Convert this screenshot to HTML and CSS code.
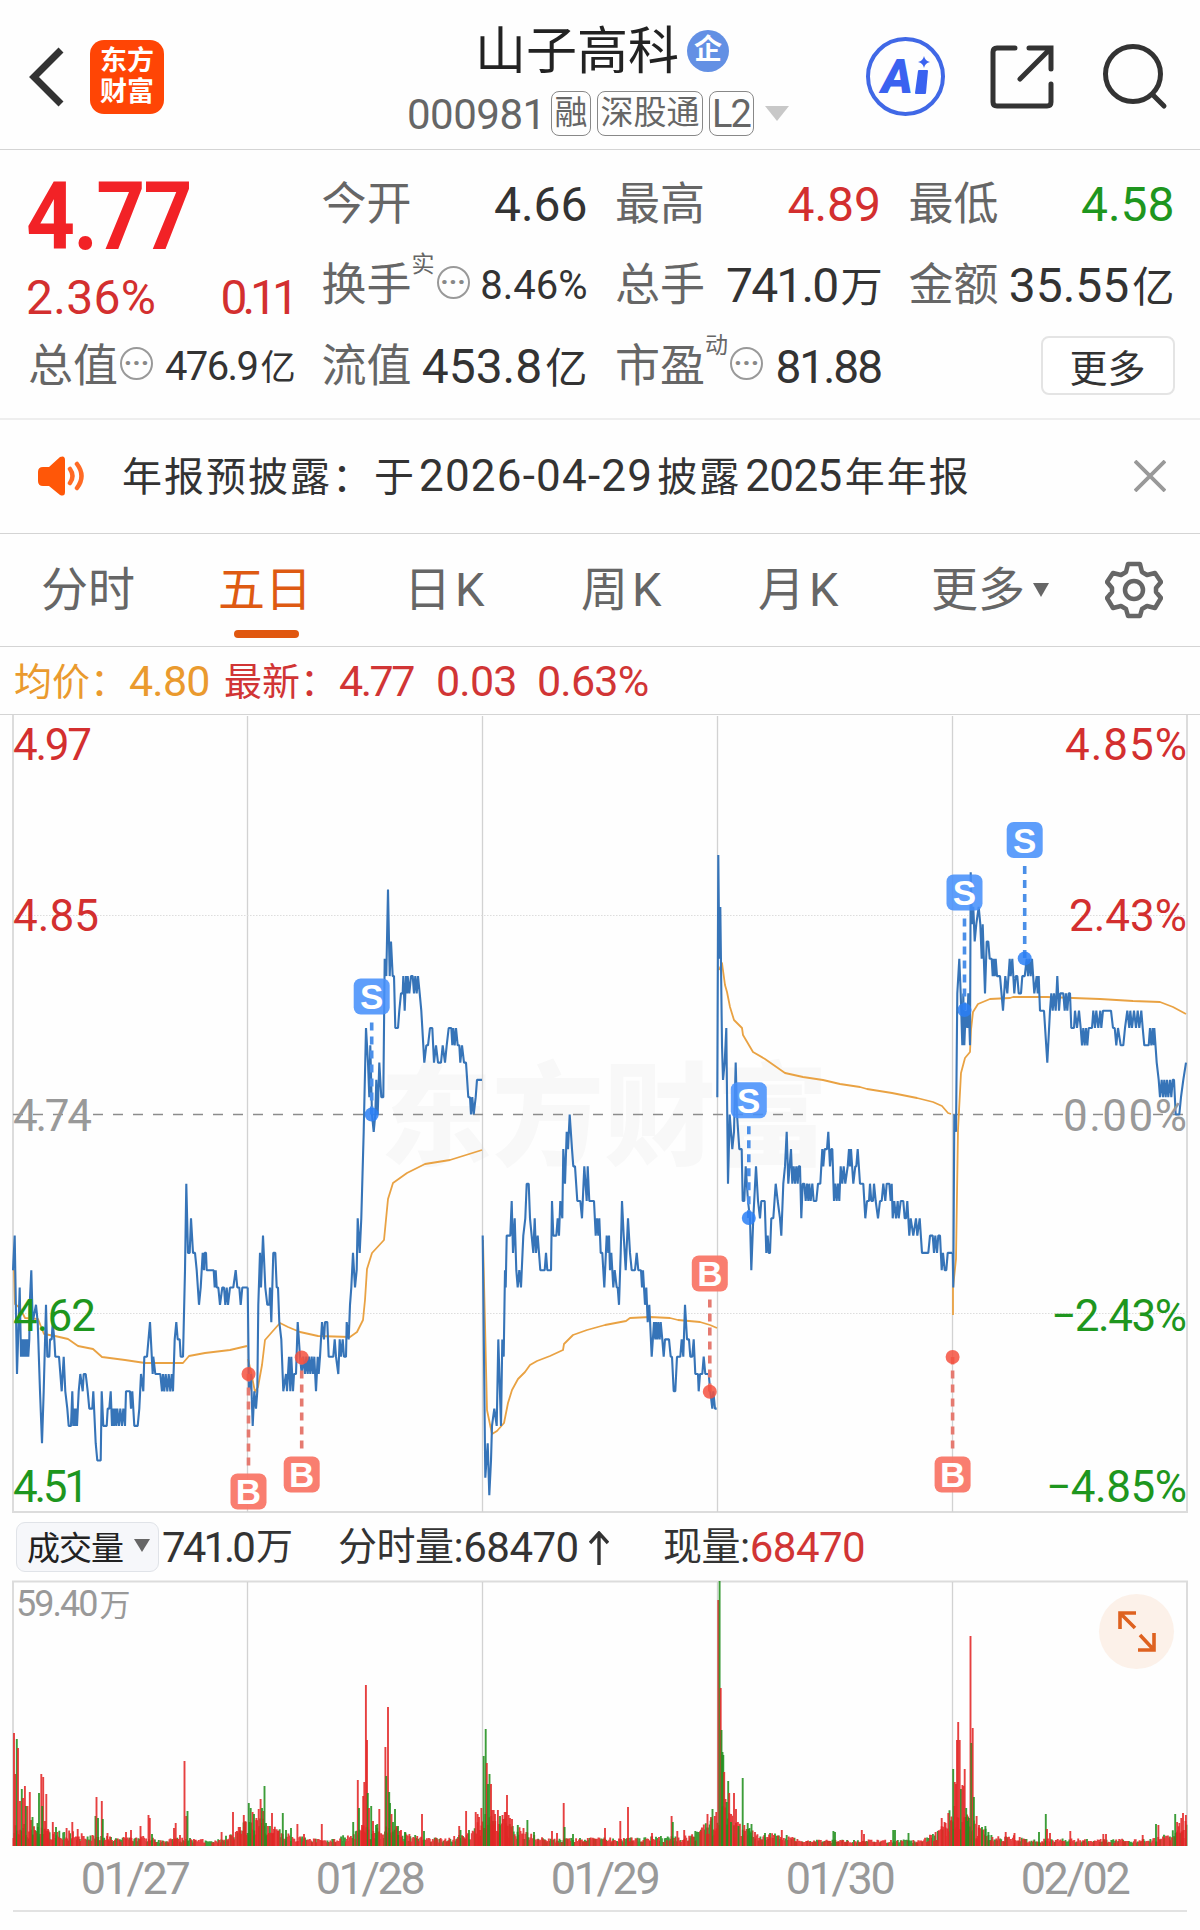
FILE: index.html
```html
<!DOCTYPE html>
<html lang="zh-CN">
<head>
    <meta charset="UTF-8">
    <meta name="viewport" content="width=device-width, initial-scale=1.0">
    <title>山子高科 000981</title>
    <link rel="stylesheet" href="styles.css">
</head>
<body>
    <header class="header">
        <div class="header-left">
            <svg class="back" width="36" height="62" viewBox="0 0 36 62"><path d="M32 4 L5 31 L32 58"/></svg>
            <div class="logo"><span>东方</span><span>财富</span></div>
        </div>
        <div class="stock">
            <div class="stock-name">山子高科<span class="badge">企</span></div>
            <div class="stock-code">
                <span class="code">000981</span>
                <span class="tag">融</span>
                <span class="tag">深股通</span>
                <span class="tag tag-l2">L2</span>
                <svg width="24" height="15" viewBox="0 0 24 15"><path d="M0 0H24L12 15Z" fill="#c8c8c8"/></svg>
            </div>
        </div>
        <div class="header-right">
            <div class="ai">
                <span>A</span>
                <svg width="15" height="40" viewBox="0 0 15 40"><path d="M9 0Q10 5 15 6Q10 7 9 12Q8 7 3 6Q8 5 9 0Z"/><path d="M4 15H12L10 37H1Z" stroke="#3a62f0" stroke-width="2" stroke-linejoin="round"/></svg>
            </div>
            <svg class="line-icon" width="64" height="64" viewBox="0 0 64 64"><path d="M25 3H7Q3 3 3 7V57Q3 61 7 61H57Q61 61 61 57V39M39 3H61V24M60 4L30 34"/></svg>
            <svg class="line-icon" width="64" height="64" viewBox="0 0 64 64"><circle cx="30" cy="29" r="27.5"/><path d="M50 50L61 61"/></svg>
        </div>
    </header>

    <section class="quote">
        <div class="price">4.77</div>
        <div class="cell"><span class="label">今开</span><span class="value">4.66</span></div>
        <div class="cell"><span class="label">最高</span><span class="value red">4.89</span></div>
        <div class="cell"><span class="label">最低</span><span class="value green">4.58</span></div>

        <div class="cell change"><span class="value red">2.36%</span><span class="value red diff">0.11</span></div>
        <div class="cell"><span class="label">换手<sup>实</sup></span><i class="dots">···</i><span class="value small">8.46%</span></div>
        <div class="cell"><span class="label">总手</span><span class="value tight">741.0<b>万</b></span></div>
        <div class="cell"><span class="label">金额</span><span class="value">35.55<b>亿</b></span></div>

        <div class="cell"><span class="label">总值</span><i class="dots">···</i><span class="value small cap">476.9<b>亿</b></span></div>
        <div class="cell"><span class="label">流值</span><span class="value">453.8<b>亿</b></span></div>
        <div class="cell"><span class="label">市盈<sup>动</sup></span><i class="dots">···</i><span class="value medium">81.88</span></div>
        <div class="cell"><button class="more">更多</button></div>
    </section>

    <section class="notice">
        <svg width="48" height="40" viewBox="0 0 48 40">
            <path d="M6 11H12L23 1Q28-1 28 4V36Q28 41 23 39L12 30H6Q1 30 1 25V16Q1 11 6 11Z" fill="#ff5708"/>
            <path d="M33 13Q38 20 33 27M40 8Q49 20 40 32" fill="none" stroke="#ff6a25" stroke-width="4.5" stroke-linecap="round"/>
        </svg>
        <p>年报预披露：于<span class="date">2026-04-29</span>披露<span>2025</span>年年报</p>
        <svg class="close" width="32" height="32" viewBox="0 0 32 32"><path d="M1 1L31 31M31 1L1 31"/></svg>
    </section>

    <nav class="tabs">
        <a>分时</a>
        <a class="active">五日</a>
        <a class="k">日K</a>
        <a class="k">周K</a>
        <a class="k">月K</a>
        <a class="tab-more">更多<svg width="16" height="14" viewBox="0 0 16 14"><path d="M0 0H16L8 14Z" fill="#666"/></svg></a>
        <svg class="gear" width="58" height="58" viewBox="0 0 58 58"><path d="M23 3H35L37 11L42 14L50 12L56 21L51 27V31L56 37L50 47L42 45L37 48L35 55H23L21 48L16 45L8 47L2 37L7 31V27L2 21L8 12L16 14L21 11Z"/><circle cx="29" cy="29" r="9"/></svg>
    </nav>

    <div class="legend">
        <span class="avg">均价：</span><span class="avg num">4.80</span>
        <span class="last">最新：</span><span class="num">4.77</span><span class="num">0.03</span><span class="num">0.63%</span>
    </div>

    <svg class="chart" id="price-chart" width="1200" height="798" viewBox="0 715 1200 798">
        <text class="watermark" x="380" y="1157" textLength="448">东方财富</text>
        <path class="frame" d="M13 714V1512H1187V714"/>
        <path class="grid" d="M247.5 716V1512M482.5 716V1512M717.5 716V1512M952.5 716V1512"/>
        <path class="dotted" d="M13 915.5H1187M13 1313.5H1187"/>
        <path class="middle" d="M13 1114.5H1187"/>
        <g id="lines"></g>
        <g class="axis">
            <text class="red" x="13" y="760" textLength="79">4.97</text>
            <text class="red" x="13" y="931" textLength="86">4.85</text>
            <text class="gray" x="13" y="1131" textLength="79">4.74</text>
            <text class="green" x="13" y="1331" textLength="83">4.62</text>
            <text class="green" x="13" y="1502" textLength="76">4.51</text>
            <text class="red" x="1065" y="760" textLength="122">4.85%</text>
            <text class="red" x="1069" y="931" textLength="118">2.43%</text>
            <text class="gray" x="1063" y="1131" textLength="124">0.00%</text>
            <text class="green" x="1051" y="1331" textLength="136">−2.43%</text>
            <text class="green" x="1046" y="1502" textLength="141">−4.85%</text>
        </g>
        <g id="marks"></g>
    </svg>

    <div class="volume-bar">
        <button class="picker">成交量<svg width="16" height="13" viewBox="0 0 16 13"><path d="M0 0H16L8 13Z" fill="#666"/></svg></button>
        <span class="total">741.0<b>万</b></span>
        <span class="minute"><b>分时量</b>:68470<svg width="20" height="34" viewBox="0 0 20 34"><path d="M10 34V3M1 12L10 2L19 12" fill="none" stroke="#333" stroke-width="3.4"/></svg></span>
        <span class="current"><b>现量</b>:<em>68470</em></span>
    </div>

    <div class="volume">
        <svg class="chart" width="1200" height="267" viewBox="0 1580 1200 267">
            <path class="frame" d="M13 1846V1581.5H1187V1846"/>
            <path class="grid" d="M247.5 1582V1846M482.5 1582V1846M717.5 1582V1846M952.5 1582V1846"/>
            <g id="bars"></g>
            <text class="peak" x="16" y="1616">59.40<tspan dx="3" font-size="31">万</tspan></text>
        </svg>
        <div class="expand">
            <svg width="38" height="42" viewBox="0 0 38 42"><path d="M2 18V2H18M3 3L17 17M36 22V39H20M35 38L22 24"/></svg>
        </div>
    </div>

    <div class="dates">
        <span>01/27</span><span>01/28</span><span>01/29</span><span>01/30</span><span>02/02</span>
    </div>

    <script src="chart.js"></script>
</body>
</html>
```
FILE: styles.css
```css
* {
    box-sizing: border-box;
}
body {
    margin: 0;
    width: 1200px;
    height: 1930px;
    overflow: hidden;
    background: #fefefe;
    color: #333;
    font-family: Roboto, "Noto Sans CJK SC", sans-serif;
    font-size: 48px;
    line-height: 1;
}
svg {
    display: block;
    flex: none;
}
b {
    font-weight: normal;
}
.red { color: #d32f2f; fill: #d32f2f; }
.green { color: #1e961e; fill: #1e961e; }
.gray { fill: #999; }

/* header */
.header {
    display: grid;
    grid-template-columns: 330px 536px 334px;
    height: 150px;
    border-bottom: 1px solid #d4d4d4;
}
.header-left {
    display: flex;
    align-items: center;
    gap: 25px;
    padding: 4px 0 0 29px;
}
.back path {
    fill: none;
    stroke: #333;
    stroke-width: 7;
}
.logo {
    display: flex;
    flex-direction: column;
    align-items: center;
    justify-content: center;
    gap: 4px;
    width: 74px;
    height: 74px;
    border-radius: 14px;
    background: #ff4505;
    color: #fff;
    font-size: 27px;
    font-weight: bold;
}
.stock {
    padding-top: 24px;
}
.stock-name {
    display: flex;
    align-items: center;
    height: 54px;
    padding-left: 145px;
    font-size: 51px;
    color: #222;
}
.badge {
    width: 42px;
    height: 42px;
    margin-left: 8px;
    border-radius: 50%;
    background: #6390e4;
    color: #fff;
    font-size: 28px;
    font-weight: bold;
    line-height: 40px;
    text-align: center;
}
.stock-code {
    display: flex;
    align-items: center;
    gap: 6px;
    height: 46px;
    margin-top: 12px;
    padding-left: 77px;
    color: #666;
}
.code {
    width: 138px;
    padding-top: 3px;
    font-size: 42px;
    letter-spacing: -0.5px;
}
.tag {
    height: 45px;
    padding: 0 2.5px;
    border: 1.5px solid #888;
    border-radius: 8px;
    font-size: 33px;
    line-height: 42px;
}
.tag-l2 {
    width: 45px;
    padding: 0 2px;
    font-size: 38px;
    letter-spacing: -2px;
    line-height: 44px;
}
.stock-code svg {
    margin-left: 5px;
}
.header-right {
    display: flex;
    align-items: center;
    padding-top: 4px;
}
.ai {
    display: flex;
    flex: none;
    align-items: center;
    justify-content: center;
    width: 79px;
    height: 79px;
    margin-right: 45px;
    border: 4px solid #4068e6;
    border-radius: 50%;
    color: #3a62f0;
    font-size: 48px;
    font-weight: 900;
    font-style: italic;
}
.ai svg {
    fill: #3a62f0;
    margin-left: 2px;
    margin-bottom: 2px;
}
.line-icon {
    margin-right: 49px;
    overflow: visible;
    fill: none;
    stroke: #333;
    stroke-width: 5;
    stroke-linecap: round;
}

/* quote */
.quote {
    display: grid;
    grid-template-columns: repeat(4, 264px);
    grid-template-rows: 81px 81px 81px;
    column-gap: 29.5px;
    height: 270px;
    padding: 14px 28px 0;
    border-bottom: 2px solid #eee;
}
.price {
    padding-top: 5px;
    margin-left: -2px;
    color: #f22226;
    font-size: 95px;
    font-weight: bold;
    letter-spacing: -2px;
    transform: scaleX(0.9);
    transform-origin: left;
}
.cell {
    display: flex;
    align-items: center;
    white-space: nowrap;
}
.label {
    position: relative;
    color: #666;
    font-size: 45px;
}
.label sup {
    position: absolute;
    left: 90px;
    top: -10px;
    font-size: 23px;
    line-height: 1;
}
.value {
    margin-left: auto;
    margin-right: -2px;
    font-size: 48px;
    letter-spacing: 0;
}
.value b {
    margin-left: 3px;
    font-size: 0.88em;
}
.tight {
    letter-spacing: -1.8px;
}
.change {
    padding-top: 25px;
}
.change .value:first-child {
    margin-left: -2px;
    letter-spacing: 0.3px;
}
.change .diff {
    letter-spacing: -5px;
}
.small {
    font-size: 40px;
}
.cap {
    letter-spacing: -1.6px;
}
.medium {
    font-size: 46px;
    letter-spacing: -2px;
}
.dots {
    width: 33px;
    height: 33px;
    margin: 0 0 6px 2px;
    border: 2.5px solid #999;
    border-radius: 50%;
    color: #888;
    font-size: 28px;
    font-style: normal;
    font-weight: bold;
    line-height: 28px;
    letter-spacing: 0;
    text-align: center;
}
.label:has(sup) + .dots {
    margin-left: 25px;
}
.more {
    width: 134px;
    height: 59px;
    margin: 0 -2px 2px auto;
    padding: 0 0 8px;
    border: 2px solid #e4e4e4;
    border-radius: 8px;
    background: #fff;
    color: #333;
    font-family: inherit;
    font-size: 38px;
}

/* notice */
.notice {
    display: flex;
    align-items: center;
    height: 114px;
    padding: 0 34px 2px 37px;
    border-bottom: 1px solid #d4d4d4;
}
.notice p {
    margin: 0 auto 0 37px;
    font-size: 40px;
    letter-spacing: 2px;
    white-space: nowrap;
}
.notice p span {
    margin: 0 3px 0 4px;
    font-size: 44px;
    letter-spacing: -0.6px;
}
.notice .date {
    margin: 0 4px 0 3px;
    letter-spacing: 1.2px;
}
.close path {
    fill: none;
    stroke: #999;
    stroke-width: 3.8;
}

/* tabs */
.tabs {
    display: flex;
    align-items: center;
    height: 113px;
    border-bottom: 1px solid #d4d4d4;
    color: #666;
    font-size: 47px;
}
.tabs a {
    flex: none;
    width: 177px;
    padding-left: 41px;
    line-height: 114px;
    white-space: nowrap;
}
.tabs .active {
    position: relative;
    width: 186px;
    color: #de5a12;
}
.tabs .k {
    letter-spacing: 4px;
}
.active::after {
    content: "";
    position: absolute;
    left: 57px;
    bottom: 9px;
    width: 65px;
    height: 8px;
    border-radius: 4px;
    background: #e0570f;
}
.tabs .tab-more {
    display: flex;
    align-items: center;
    gap: 8px;
    width: 213px;
    padding-left: 37px;
}
.tabs .gear {
    margin-left: -2px;
    fill: none;
    stroke: #666;
    stroke-width: 4.5;
    stroke-linejoin: round;
}

/* legend */
.legend {
    display: flex;
    align-items: center;
    height: 68px;
    padding: 2px 0 0 14px;
    border-bottom: 1px solid #d4d4d4;
    color: #d13535;
    font-size: 38px;
}
.avg {
    width: 115px;
    color: #ea9a2e;
}
.last {
    width: 115px;
}
.num {
    width: 101px;
    font-size: 43px;
    letter-spacing: -0.8px;
}
.last + .num {
    width: 97px;
    letter-spacing: -2.5px;
}
.avg.num {
    width: 95px;
}

/* charts */
.chart {
    overflow: hidden;
}
.frame {
    fill: none;
    stroke: #dcdcdc;
    stroke-width: 2;
}
.grid {
    stroke: #d2d2d2;
    stroke-width: 1.3;
}
.dotted {
    stroke: #ddd;
    stroke-width: 1;
    stroke-dasharray: 1.5 1.5;
}
.middle {
    stroke: #8c8c8c;
    stroke-width: 1.7;
    stroke-dasharray: 10 10;
}
.watermark {
    fill: #f8f8f8;
    font-size: 112px;
    font-weight: 900;
}
.axis {
    font-size: 44px;
}
.price-line {
    fill: none;
    stroke: #3674b8;
    stroke-width: 2.1;
    stroke-linejoin: bevel;
}
.avg-line {
    fill: none;
    stroke: #e9a243;
    stroke-width: 1.8;
    stroke-linejoin: round;
}
.mark text {
    fill: #fff;
    font-family: "Liberation Sans", sans-serif;
    font-size: 35px;
    font-weight: bold;
    text-anchor: middle;
}
.mark line {
    stroke-width: 3.6;
    stroke-dasharray: 8 6;
}
.sell rect { fill: #4891fa; fill-opacity: 0.88; }
.sell circle { fill: #2a7ff5; fill-opacity: 0.85; }
.sell line { stroke: #4b8fe8; }
.buy rect { fill: #f97768; fill-opacity: 0.95; }
.buy circle { fill: #f4513f; fill-opacity: 0.85; }
.buy line { stroke: #e57a70; }

/* volume */
.volume-bar {
    display: grid;
    grid-template-columns: 146px 176px 325px auto;
    align-items: center;
    height: 67px;
    padding-left: 16px;
    font-size: 42px;
    letter-spacing: -0.5px;
}
.volume-bar span {
    display: flex;
    align-items: center;
    padding-top: 2px;
    white-space: nowrap;
}
.volume-bar b {
    font-size: 39px;
}
.picker {
    display: flex;
    align-items: center;
    gap: 11px;
    width: 143px;
    height: 50px;
    padding: 0 0 2px 10px;
    border: 1.5px solid #e0e3e8;
    border-radius: 9px;
    background: #f6f7fa;
    color: #222;
    font-family: inherit;
    font-size: 33px;
    letter-spacing: -1px;
    white-space: nowrap;
}
.volume-bar .total {
    letter-spacing: -2.9px;
}
.total b {
    margin-left: 3px;
    font-size: 37px;
}
.minute svg {
    margin-left: 10px;
}
.current em {
    color: #d13535;
    font-style: normal;
}
.volume {
    position: relative;
    height: 267px;
}
.peak {
    fill: #999;
    font-size: 36px;
    letter-spacing: -2px;
}
.vol-up { stroke: #e32626; }
.vol-down { stroke: #218f1e; }
.vol-up, .vol-down {
    fill: none;
    stroke-width: 1.9;
    stroke-opacity: 0.88;
}
.expand {
    position: absolute;
    right: 26px;
    top: 14px;
    display: flex;
    align-items: center;
    justify-content: center;
    width: 75px;
    height: 75px;
    border-radius: 50%;
    background: #fcf1e9;
}
.expand path {
    fill: none;
    stroke: #de6220;
    stroke-width: 3.6;
}
.dates {
    display: grid;
    grid-template-columns: repeat(5, 235px);
    width: 1174px;
    height: 65px;
    margin-left: 13px;
    padding: 9px 0 0 4px;
    border-bottom: 2px solid #e2e2e2;
    color: #999;
    font-size: 45px;
    letter-spacing: -2.4px;
    text-align: center;
}
```
FILE: chart.js
```js
const NS = "http://www.w3.org/2000/svg";
const MIDDLE = 1114.5;
const CENT = 17.3;

// one entry per day: left offset and "x,cents below 4.74" (x in thirds of a pixel)
const prices = [
    [0, "39,9 44,7 51,15 59,10 63,14 65,13 67,14 70,13 73,14 76,13 79,14 82,13 85,14 88,13 89,11 94,9 98,12 108,11 113,12 120,16 126,19 131,16 138,11 142,14 148,14 150,13 155,13 158,12 163,13 166,14 177,14 185,16 191,14 196,16 202,17 206,18 213,18 217,16 220,18 223,17 226,18 229,17 231,18 236,16 241,15 248,16 251,15 257,15 263,16 268,17 277,17 280,16 287,19 292,20 302,20 305,16 310,18 320,18 323,17 328,17 332,16 336,18 340,17 342,18 346,17 349,18 352,17 357,18 361,17 366,18 370,17 375,18 378,16 390,16 393,17 397,16 403,18 413,18 418,17 423,15 430,16 433,14 441,14 450,12 458,15 460,14 466,15 481,15 486,16 489,15 493,16 497,15 502,16 506,15 511,16 515,15 519,16 524,13 529,12 533,13 539,13 542,14 549,14 555,9 559,4 564,8 569,8 573,6 579,8 585,8 590,9 597,11 602,10 608,8 612,9 614,8 618,8 620,9 641,9 644,10 647,9 650,10 655,10 660,11 667,10 672,10 676,11 680,10 684,11 690,10 700,10 707,9 712,10 718,10 722,11 727,10 743,10"],
    [240, "23,10 27,16 33,15 38,18 43,16 48,17 52,16 55,11 60,8 63,10 69,7 76,10 82,11 88,11 90,10 94,12 100,8 106,8 110,10 114,10 118,12 124,13 130,16 138,15 141,16 147,14 151,16 154,14 159,16 162,15 168,15 173,12 180,14 185,15 190,14 195,15 199,14 203,15 207,14 211,15 215,14 219,15 223,14 228,16 233,14 236,15 240,14 246,12 252,13 255,12 262,12 266,14 280,14 284,13 288,14 295,15 299,13 303,14 308,13 312,14 318,14 320,12 326,13 330,11 334,10 339,8 345,10 350,9 353,6 359,8 364,6 371,1 378,-5 384,-3 388,-1 391,-4 396,0 401,1 406,0 409,-2 413,0 418,-3 424,-1 430,-1 434,-9 439,-8 444,-13 449,-8 453,-10 458,-8 462,-8 466,-5 474,-5 478,-6 483,-7 488,-7 490,-8 494,-6 498,-8 501,-7 503,-8 508,-7 513,-8 518,-8 522,-7 526,-8 530,-7 534,-8 539,-7 544,-6 553,-3 559,-4 564,-4 570,-5 577,-5 582,-3 588,-4 594,-3 603,-3 608,-4 615,-3 620,-4 626,-5 634,-5 637,-4 640,-5 644,-4 648,-5 653,-4 658,-4 661,-3 666,-4 672,-3 678,-3 685,-1 690,-1 693,0 697,-1 701,0 707,-1 711,-2 726,-2"],
    [470, "38,7 46,21 53,19 58,22 63,20 66,18 73,17 80,18 85,13 93,18 97,13 101,14 105,9 107,10 110,7 121,7 125,5 129,8 134,6 139,9 143,10 148,9 153,10 160,7 166,6 170,4 176,4 180,6 190,8 194,6 198,8 203,7 207,8 211,9 224,9 228,8 232,9 243,9 246,5 250,7 259,7 263,6 267,7 271,5 277,6 280,2 285,4 290,1 294,2 299,0 306,2 310,3 315,3 322,5 331,5 336,6 343,3 350,5 353,3 358,5 372,5 377,7 381,6 385,7 388,6 392,8 397,8 403,10 410,7 415,8 417,7 420,9 424,8 430,10 434,9 440,10 443,10 447,11 452,8 456,5 461,7 467,9 474,6 480,8 485,9 495,9 500,8 505,9 513,9 516,10 519,9 525,11 529,10 533,12 538,11 545,14 552,12 556,13 558,12 562,13 565,12 569,13 572,12 577,13 581,14 585,13 597,13 602,14 606,14 611,16 616,16 621,14 631,14 635,13 640,14 645,11 651,13 657,13 661,14 667,14 671,13 676,15 684,15 686,16 690,15 697,15 701,14 706,15 716,15 721,16 727,17 730,16 735,17 740,17"],
    [700, "52,-1 55,-15 58,-9 61,-12 66,-4 69,-2 74,-3 79,-5 84,4 89,0 93,1 97,2 102,1 107,-3 111,0 118,2 125,2 128,5 133,5 137,3 144,5 150,6 154,9 160,6 168,3 174,5 180,6 184,5 194,5 199,8 203,7 206,8 210,8 214,6 220,6 227,4 233,5 240,6 244,7 250,4 255,3 260,1 265,4 273,2 277,4 281,3 285,4 289,3 293,4 296,3 300,3 304,6 308,4 313,4 317,5 321,4 325,5 328,4 332,5 337,4 341,5 349,5 354,4 361,4 367,2 370,3 374,2 381,2 385,1 390,3 394,2 397,2 402,5 406,4 410,5 414,4 418,5 422,3 427,4 431,3 436,4 443,3 447,2 450,3 453,2 460,4 466,3 469,3 473,2 480,4 490,4 496,6 501,5 507,5 510,4 514,5 519,5 522,4 527,5 534,6 540,5 545,5 550,4 556,5 560,4 568,4 572,5 575,4 578,6 583,5 588,6 593,5 596,6 602,5 610,5 614,6 618,6 622,5 628,7 632,6 640,7 648,6 652,7 659,6 666,8 685,8 690,7 698,7 702,8 706,7 711,8 715,7 720,7 725,9 729,8 734,9 739,9 743,8 757,8"],
    [930, "68,8 70,10 73,0 78,1 82,-7 88,-9 92,-7 97,-4 100,-7 103,-4 107,-6 112,-5 115,-7 120,-4 122,-14 126,-11 130,-12 134,-10 139,-11 146,-12 151,-11 155,-9 158,-11 165,-7 170,-10 175,-10 179,-9 185,-9 188,-8 191,-9 194,-8 197,-9 201,-8 210,-8 219,-6 226,-8 232,-7 239,-9 242,-8 247,-9 253,-7 257,-8 262,-8 266,-7 273,-7 277,-8 284,-8 290,-9 294,-8 298,-9 302,-8 306,-9 313,-7 320,-8 323,-7 326,-8 330,-6 342,-6 352,-3 360,-6 364,-7 368,-6 372,-7 377,-6 382,-8 387,-6 391,-7 400,-7 404,-6 408,-7 412,-6 416,-7 420,-7 424,-5 432,-5 435,-6 441,-5 447,-6 452,-5 456,-4 460,-5 464,-4 468,-5 472,-4 476,-5 486,-5 490,-6 495,-5 499,-6 505,-5 511,-6 514,-5 519,-6 543,-6 549,-5 554,-5 559,-4 564,-5 572,-4 580,-4 585,-5 592,-6 598,-5 601,-6 606,-5 612,-6 618,-5 623,-6 628,-5 634,-6 638,-5 643,-4 656,-4 660,-5 664,-4 668,-5 671,-4 673,-5 680,-3 686,-2 690,-1 695,-2 699,-1 703,-2 707,-1 711,-2 715,-1 720,-2 724,-1 728,-2 732,-2 737,0 748,0 753,-1 760,-2 768,-3"]
];

const averages = [
    "13,1270 14,1270 15,1304 20,1308 25,1318 38,1319 44,1334 55,1336 68,1339 78,1346 93,1349 102,1357 125,1360 145,1363 183,1363 189,1356 205,1353 230,1350 247,1346",
    "248,1359 251,1372 255,1392 258,1387 262,1365 265,1340 272,1332 280,1323 288,1327 300,1332 318,1336 350,1337 357,1332 363,1320 365,1300 367,1269 372,1253 384,1240 388,1199 393,1183 407,1173 425,1164 450,1160 482,1150",
    "483,1240 485,1323 487,1410 492,1434 497,1431 504,1423 508,1403 512,1390 518,1379 525,1372 530,1365 537,1361 550,1356 563,1350 564,1344 573,1335 587,1330 605,1325 626,1321 630,1318 650,1317 670,1318 678,1320 700,1322 710,1325 717,1328",
    "719,970 722,963 725,985 727,992 730,1007 734,1020 742,1028 743,1035 753,1052 765,1059 785,1073 803,1077 823,1080 840,1084 860,1087 867,1089 892,1093 917,1098 933,1102 942,1106 948,1113 951,1114",
    "953,1315 953,1288 956,1259 958,1130 961,1073 965,1058 970,1052 971,1030 973,1012 978,1004 990,999 1010,998 1013,997 1047,997 1073,998 1100,999 1133,1001 1160,1002 1173,1007 1186,1014"
];

// type, x, y of the badge, y of the dot
const marks = [
    ["B", 248.5, 1491.5, 1374], ["B", 301.7, 1474.5, 1357.5], ["S", 371.7, 996.5, 1114.5], ["B", 709.8, 1273.5, 1391.7],
    ["S", 748.8, 1100.3, 1218], ["S", 964.5, 892.5, 1010], ["S", 1024.7, 840, 958.4], ["B", 952.6, 1474.5, 1357]
];

// tall volume bars: x, height, r = up / g = down
const spikes = "14,113,r 15.3,72,r 16.8,107,g 18,98,r 20,45,r 21.8,57,g 23,48,r 24.9,60,r 26,40,g 27.5,40,r 29.8,54,r 31,26,r 32.5,29,g 35,16,r 37.5,23,g 39,53,g 41.3,72,r 43.2,69,r 42.2,40,g 45,25,r 46.3,52,r 48,17,r 52.8,24,r 56,19,g 66.6,18,r 72.3,24,r 77.7,17,r 95.5,30,g 96.5,49,r 98,28,g 101.8,45,r 102.8,27,g 107.5,13,r 126,14,r 131,16,r 140.5,20,r 148.5,31,r 149.8,28,r 152,12,g 174,18,r 175.7,23,r 180,11,r 184.5,85,r 186.2,30,r 187.5,35,g 221.6,14,r 233,34,r 240,19,r 243.8,31,r 245.7,24,r " +
    "248.8,43,g 250.7,38,g 252.6,34,r 254,32,g 256.4,28,r 258.7,37,r 260.6,47,r 262,38,g 263.3,35,r 264.5,60,g 266,23,g 268,20,r 272,33,r 274,17,r 278,15,r 282.8,33,g 286,16,g 291,18,g 297.4,22,r 304,12,r 321.8,22,r 353.2,24,g 357.8,66,r 359,38,g 362,21,r 363.2,50,r 364.3,64,r 365.9,161,r 367,106,r 367.8,53,g 369,38,r 371.2,40,g 373,25,r 376,21,g 379.3,37,r 377.3,22,g 385.4,99,r 386.3,70,g 388,139,r 389.2,54,g 390,43,g 391.5,32,r 393,24,g 395,37,g 396.5,20,r 398,20,g 401,16,r 405,14,g 422,32,r 424,15,g 459.2,20,r 460.5,16,g 466.1,35,r 469,16,g 475.7,34,r 477.6,32,r 479,29,r 481.4,38,r " +
    "483.7,90,g 485.7,117,g 486.8,83,r 488,62,g 489.5,72,g 491,62,r 492,36,r 493.7,36,r 495,32,r 497.9,36,r 500,30,g 502.5,31,r 504.8,34,r 506,34,r 507,51,r 508.6,31,r 510,28,r 512,27,r 517.8,21,g 523.5,18,r 527.4,26,g 534,14,g 552,15,r 557,13,r 563.7,43,r 564.6,19,g 573,12,g 605,18,r 620.3,25,r 628,39,r 652,13,r 671.6,30,r 672.8,24,g 677.3,15,r 684.2,16,r 695.3,15,g 700.3,15,r 707.5,32,r 711,29,r 712.5,37,g 714.8,30,r 716.3,34,r " +
    "718.3,246,r 719.6,265,g 720.7,158,r 721.5,116,g 722.5,94,g 723.3,91,g 724.2,74,r 725.5,47,r 726.7,44,g 728.2,65,g 729.2,53,r 731,24,g 734,53,r 736,37,r 738.5,20,g 742.7,68,g 744.3,21,r 747.7,23,g 749.5,18,g 751.5,22,g 755,14,r 765,13,g 781.8,16,r 833.4,15,g 835,14,g 861.8,16,r 864,12,r 893.2,16,g 895,16,g 908.5,13,g 935.6,14,r 941.7,28,r 945.6,23,r 948.3,33,r 951.3,26,r " +
    "953.2,77,g 954.8,64,r 956,62,r 957,106,r 958.2,124,r 959.7,106,r 961,57,g 962.4,61,r 964.7,77,r 963.5,60,r 966.2,38,g 967.8,25,g 969,28,g 970.5,210,r 971.4,103,g 972.7,118,r 973.9,49,g 976.6,30,r 979,21,r 982,19,g 985.4,20,g 988.4,14,g 1005.7,14,r 1014.5,13,r 1039,14,g 1045.8,32,g 1047,17,r 1050,13,r 1070.3,15,r 1103.3,12,r 1106,12,r 1142.7,11,r 1156,22,g 1158.4,21,r 1175.2,32,g 1177.1,24,r 1179.4,23,r 1181.3,28,r 1183,33,r 1185.9,31,r";

// usual height of the small bars: x, height
const level = [[13, 24], [24, 22], [34, 17], [50, 14], [75, 12], [90, 9], [120, 6], [145, 9], [160, 4], [180, 6], [210, 4], [230, 9], [246, 22], [262, 24], [272, 17], [290, 9], [310, 6], [330, 4], [350, 10], [362, 20], [374, 16], [383, 13], [390, 24], [400, 12], [425, 6], [450, 6], [470, 12], [483, 28], [498, 28], [512, 20], [530, 10], [550, 5], [590, 6], [630, 6], [650, 7], [690, 8], [712, 24], [722, 36], [738, 22], [755, 11], [785, 9], [805, 4], [850, 4], [920, 4], [940, 14], [953, 37], [975, 22], [990, 11], [1015, 8], [1030, 5], [1090, 5], [1150, 5], [1170, 12], [1187, 24]];

function add(parent, name, attrs, text) {
    const el = document.createElementNS(NS, name);
    for (const key in attrs) el.setAttribute(key, attrs[key]);
    if (text) el.textContent = text;
    parent.appendChild(el);
    return el;
}

const lines = document.getElementById("lines");
averages.forEach(points => add(lines, "polyline", { class: "avg-line", points }));
prices.forEach(([left, list]) => {
    const points = list.split(" ").map(p => {
        const [x, k] = p.split(",");
        return (left + x / 3).toFixed(1) + "," + (MIDDLE + k * CENT).toFixed(1);
    }).join(" ");
    add(lines, "polyline", { class: "price-line", points });
});

const markLayer = document.getElementById("marks");
marks.forEach(([type, x, y, dot]) => {
    const g = add(markLayer, "g", { class: "mark " + (type === "S" ? "sell" : "buy") });
    const side = dot > y ? 1 : -1;
    add(g, "line", { x1: x, y1: y + side * 26, x2: x, y2: dot });
    add(g, "circle", { cx: x, cy: dot, r: 7 });
    add(g, "rect", { x: x - 18, y: y - 18, width: 36, height: 36, rx: 7 });
    add(g, "text", { x, y: y + 12.5 }, type);
});

function levelAt(x) {
    let i = 1;
    while (i < level.length - 1 && level[i][0] < x) i++;
    const [x0, h0] = level[i - 1];
    const [x1, h1] = level[i];
    return h0 + (h1 - h0) * (x - x0) / (x1 - x0);
}

let seed = 981;
function random() {
    seed = (seed * 16807) % 2147483647;
    return seed / 2147483647;
}

const bars = document.getElementById("bars");
let up = "";
let down = "";
for (let x = 13.5; x < 1187; x += 0.975) {
    const h = 2 + levelAt(x) * (0.25 + random() * 0.85);
    const d = `M${x.toFixed(1)} 1846v${-h.toFixed(1)}`;
    if (random() < 0.62) up += d;
    else down += d;
}
add(bars, "path", { class: "vol-down", d: down });
add(bars, "path", { class: "vol-up", d: up });
spikes.split(" ").forEach(s => {
    const [x, h, c] = s.split(",");
    add(bars, "path", { class: c === "r" ? "vol-up" : "vol-down", d: `M${x} 1846v-${h}` });
});
```
